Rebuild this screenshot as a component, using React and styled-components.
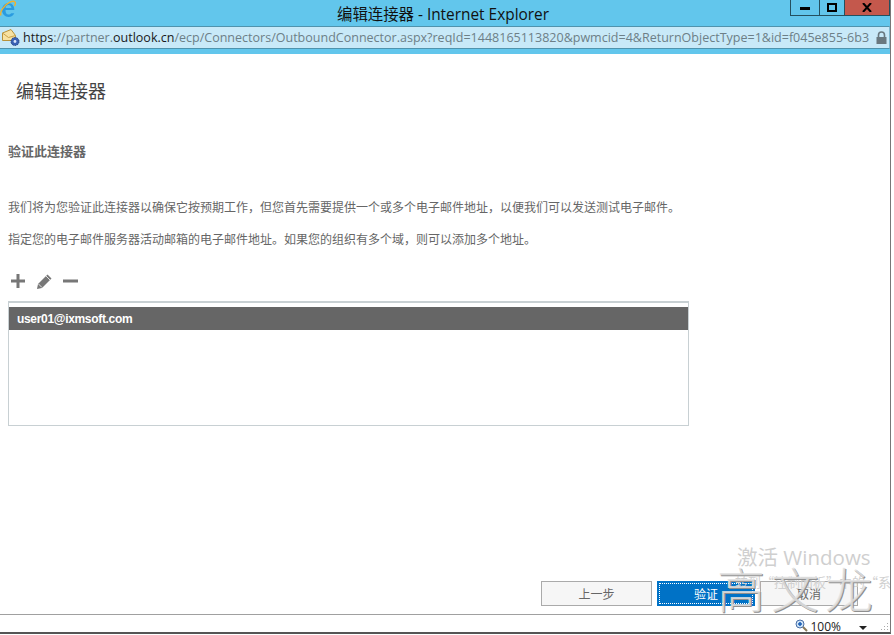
import React from "react";
import styled, { createGlobalStyle } from "styled-components";

const CJK = `"Liberation Sans", "Noto Sans CJK SC", sans-serif`;

const Global = createGlobalStyle`
  html, body { margin: 0; padding: 0; background: #fff; }
  body { font-family: ${CJK}; }
`;

const Page = styled.div`
  position: relative;
  width: 894px;
  height: 635px;
  overflow: hidden;
  background: #fff;
`;

const Window = styled.div`
  width: 891px;
  height: 634px;
  display: flex;
  flex-direction: column;
  border-bottom: 2px solid #555;
  border-right: 1px solid #777;
  box-sizing: border-box;
`;

const TitleBar = styled.div`
  height: 26px;
  background: #62c6ec;
  position: relative;
  display: flex;
  align-items: center;
  justify-content: center;
  font-family: "Open Sans", "Noto Sans CJK SC", sans-serif;
  font-size: 15.4px;
  color: #111;
  flex: none;
  padding-right: 4px;
`;

const TitleIcon = styled.svg`
  position: absolute;
  left: 0;
  top: 0;
`;

const Controls = styled.div`
  position: absolute;
  right: 0;
  top: 0;
  display: flex;
  height: 15px;
  border: 1px solid #24505f;
  border-top: none;
`;

const Control = styled.div`
  width: ${(p) => p.$w}px;
  display: flex;
  align-items: center;
  justify-content: center;
  background: ${(p) => p.$bg || "transparent"};
  border-left: ${(p) => (p.$sep ? "1px solid #24505f" : "none")};
`;

const AddressWrap = styled.div`
  flex: none;
  height: 28px;
  background: #62c6ec;
`;

const AddressBar = styled.div`
  height: 23px;
  background: #c8e9f8;
  border-top: 1px solid #4f93ad;
  border-bottom: 1px solid #4f93ad;
  border-right: 1px solid #7fb8cf;
  box-sizing: border-box;
  display: flex;
  align-items: center;
  font-family: "Open Sans", "Noto Sans", sans-serif;
  font-size: 12.52px;
  color: #6d7f87;
  white-space: nowrap;
  overflow: hidden;
  padding-left: 1px;
`;

const Url = styled.span`
  margin-left: 2px;
  flex: 1;
  overflow: hidden;
  width: 0;
`;

const Dark = styled.span`
  color: #1a1a1a;
`;

const Lock = styled.svg`
  flex: none;
  margin: 0 2px 0 5px;
`;

const Content = styled.main`
  flex: 1;
  display: flex;
  flex-direction: column;
  padding: 0 0 0 8px;
  color: #666;
  font-size: 12px;
  min-height: 0;
`;

const Title = styled.h1`
  margin: 25px 0 0 8px;
  font-size: 18px;
  line-height: 26px;
  font-weight: 400;
  color: #444;
`;

const Heading = styled.h2`
  margin: 38px 0 0;
  font-size: 13px;
  line-height: 18px;
  font-weight: 700;
  color: #666;
`;

const Para = styled.p`
  margin: ${(p) => p.$top}px 0 0;
  font-size: 12px;
  line-height: 18px;
`;

const Toolbar = styled.div`
  display: flex;
  align-items: center;
  gap: 10px;
  height: 18px;
  margin-top: 23px;
  padding-left: 2px;
`;

const List = styled.div`
  margin-top: 11px;
  width: 681px;
  height: 125px;
  box-sizing: border-box;
  border: 1px solid #c8d0d3;
  border-top-width: 2px;
  padding-top: 4px;
`;

const Row = styled.div`
  height: 23px;
  background: #666;
  color: #fff;
  font-weight: 700;
  font-size: 12px;
  letter-spacing: -0.32px;
  line-height: 25px;
  padding-left: 8px;
`;

const Footer = styled.div`
  margin-top: auto;
  display: flex;
  gap: 5px;
  padding-left: 533px;
  padding-bottom: 8px;
`;

const Button = styled.div`
  width: ${(p) => p.$w}px;
  height: 25px;
  box-sizing: border-box;
  display: flex;
  align-items: center;
  justify-content: center;
  font-size: 12px;
  color: ${(p) => (p.$primary ? "#fff" : "#666")};
  background: ${(p) => (p.$primary ? "#0072c6" : "#f6f6f6")};
  border: 1px solid ${(p) => (p.$primary ? "#0072c6" : "#aaa")};
  position: relative;
  ${(p) =>
    p.$primary &&
    `&::after { content: ""; position: absolute; inset: 1px; border: 1px dotted #fff; }`}
`;

const StatusBar = styled.div`
  flex: none;
  height: 18px;
  box-sizing: border-box;
  overflow: hidden;
  border-top: 1px solid #a0a0a0;
  position: relative;
  display: flex;
  justify-content: flex-end;
  align-items: flex-start;
  font-family: "Open Sans", sans-serif;
  font-size: 12px;
  color: #222;
  padding: 4px 23px 0 0;
  gap: 18px;
`;

const Zoom = styled.span`
  display: flex;
  align-items: flex-start;
  gap: 2px;
  line-height: 16px;
`;

const Caret = styled.span`
  margin-top: 7px;
  width: 0;
  height: 0;
  border: 4px solid transparent;
  border-top: 4px solid #222;
  border-bottom: none;
`;

const Grip = styled.svg`
  position: absolute;
  right: 1px;
  bottom: 1px;
`;

const Activate = styled.div`
  position: absolute;
  left: 737px;
  top: 544px;
  font-family: "Open Sans", "Noto Sans CJK SC", sans-serif;
  font-size: 20.5px;
  line-height: 27px;
  color: #cfcfcf;
  white-space: nowrap;
`;

const ActivateSub = styled.div`
  position: absolute;
  left: 735px;
  top: 574px;
  width: 155px;
  overflow: hidden;
  font-family: "Noto Sans CJK SC", sans-serif;
  font-size: 13px;
  line-height: 16px;
  color: #d0d0d0;
  white-space: nowrap;
`;

const Signature = styled.div`
  position: absolute;
  left: 717px;
  top: 556px;
  display: flex;
  gap: 6px;
  font-family: "Noto Sans CJK SC", sans-serif;
  font-size: 48px;
  line-height: 62px;
  font-weight: 300;
  color: rgba(225, 225, 225, 0.85);
  text-shadow: 1px 1px 0 #8f8f8f;
  white-space: nowrap;
`;

const IeIcon = () => (
  <TitleIcon width="16" height="18" viewBox="0 0 16 18">
    <path d="M3.500 10h10.800c.3-4.200-2.500-7-5.800-7C5 3 2 6 2 10s3 7 6.500 7c2.700 0 4.900-1.400 5.800-3.800h-3.100c-.6.900-1.500 1.400-2.700 1.400-1.800 0-3-1.600-3-4.600zM5.600 8c.2-1.900 1.300-3 2.900-3s2.800 1.100 2.900 3z" fill="#2a9be0" />
    <path d="M1 15.500C-.6 12 4 5 9.500 2.400c2.700-1.300 5-1.200 5.700 0 .5.900 0 2.400-.9 3.600" fill="none" stroke="#eeb12f" strokeWidth="1.400" />
  </TitleIcon>
);

const MailIcon = () => (
  <svg width="20" height="19" viewBox="0 0 20 19" style={{ flex: "none" }}>
    <path d="M1.500 5L10 1.500l4.500 6v5H1.500z" fill="#f7e2a2" stroke="#b8923a" />
    <path d="M1.500 5l6 4.500 7-2" fill="none" stroke="#c9a24a" />
    <circle cx="14" cy="13.500" r="4" fill="#3b62b4" stroke="#27437f" strokeDasharray="1.500 1" />
    <circle cx="14" cy="13.500" r="1.400" fill="#dbe6fa" />
  </svg>
);

const Plus = () => (
  <svg width="16" height="16" viewBox="0 0 16 16">
    <path d="M6.500 1h3v5.500H15v3H9.500V15h-3V9.500H1v-3h5.500z" fill="#777" />
  </svg>
);
const Pencil = () => (
  <svg width="17" height="17" viewBox="0 0 17 17">
    <path d="M1 16l1-5L11.500 1.500l4 4L6 15z" fill="#777" />
    <path d="M2.500 11l3.500 3.500" stroke="#fff" strokeWidth=".8" />
    <path d="M10 3l4 4" stroke="#fff" strokeWidth=".8" />
  </svg>
);
const Minus = () => (
  <svg width="15" height="16" viewBox="0 0 15 16">
    <rect x="0" y="6.500" width="15" height="3" fill="#777" />
  </svg>
);

export default function App() {
  return (
    <Page>
      <Global />
      <Window>
        <TitleBar>
          <IeIcon />
          编辑连接器 - Internet Explorer
          <Controls>
            <Control $w={28}>
              <svg width="10" height="4" viewBox="0 0 10 4"><rect width="10" height="3" y="1" fill="#000" /></svg>
            </Control>
            <Control $w={24} $sep>
              <svg width="10" height="9" viewBox="0 0 10 9"><rect x="1" y="1" width="8" height="7" fill="none" stroke="#000" strokeWidth="2" /></svg>
            </Control>
            <Control $w={44} $sep $bg="#c4584c">
              <svg width="10" height="9" viewBox="0 0 10 9"><path d="M1 0l8 9M9 0L1 9" stroke="#000" strokeWidth="2" /></svg>
            </Control>
          </Controls>
        </TitleBar>
        <AddressWrap>
          <AddressBar>
            <MailIcon />
            <Url>
              <Dark>https</Dark>://partner.<Dark>outlook.cn</Dark>/ecp/Connectors/OutboundConnector.aspx?reqId=1448165113820&amp;pwmcid=4&amp;ReturnObjectType=1&amp;id=f045e855-6b3
            </Url>
            <Lock width="11" height="13" viewBox="0 0 11 13">
              <path d="M2.500 6V4a3 3 0 0 1 6 0v2" fill="none" stroke="#69787f" strokeWidth="1.600" />
              <rect x="0.500" y="6" width="10" height="7" fill="#69787f" />
            </Lock>
          </AddressBar>
        </AddressWrap>
        <Content>
          <Title>编辑连接器</Title>
          <Heading>验证此连接器</Heading>
          <Para $top={38}>我们将为您验证此连接器以确保它按预期工作，但您首先需要提供一个或多个电子邮件地址，以便我们可以发送测试电子邮件。</Para>
          <Para $top={14}>指定您的电子邮件服务器活动邮箱的电子邮件地址。如果您的组织有多个域，则可以添加多个地址。</Para>
          <Toolbar>
            <Plus />
            <Pencil />
            <Minus />
          </Toolbar>
          <List>
            <Row>user01@ixmsoft.com</Row>
          </List>
          <Footer>
            <Button $w={111}>上一步</Button>
            <Button $w={98} $primary>验证</Button>
            <Button $w={98}>取消</Button>
          </Footer>
        </Content>
        <StatusBar>
          <Zoom>
            <svg width="13" height="13" viewBox="0 0 13 13">
              <circle cx="5" cy="5" r="4" fill="#cfe3f7" stroke="#4a6fa5" />
              <path d="M3 5h4M5 3v4" stroke="#1b5fb5" strokeWidth="1.500" />
              <path d="M8 8l4 4" stroke="#8a7a5a" strokeWidth="2" />
            </svg>
            100%
          </Zoom>
          <Caret />
          <Grip width="8" height="8" viewBox="0 0 8 8">
            <path d="M6 0h1v1H6zM3 3h1v1H3zM6 3h1v1H6zM0 6h1v1H0zM3 6h1v1H3zM6 6h1v1H6z" fill="#aaa" />
          </Grip>
        </StatusBar>
      </Window>
      <Activate>激活 Windows</Activate>
      <ActivateSub>转到“控制面板”中的“系统”以激活</ActivateSub>
      <Signature>
        <span>高</span>
        <span>文</span>
        <span>龙</span>
      </Signature>
    </Page>
  );
}
